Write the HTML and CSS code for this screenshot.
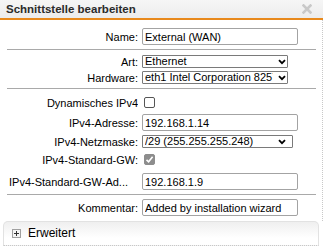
FILE: index.html
```html
<!DOCTYPE html>
<html lang="de">
<head>
    <meta charset="UTF-8">
    <meta name="viewport" content="width=device-width, initial-scale=1.0">
    <title>Schnittstelle bearbeiten</title>
    <link rel="stylesheet" href="styles.css">
</head>
<body>
    <div class="dialog">
        <div class="titlebar">
            <span class="title">Schnittstelle bearbeiten</span>
            <svg class="close" width="10" height="10" viewBox="0 0 10 10">
                <path d="M1.5 1.5 L8.5 8.5 M8.5 1.5 L1.5 8.5" stroke="#c9c9c9" stroke-width="2.6" stroke-linecap="square"/>
            </svg>
        </div>

        <div class="content">
            <div class="row row-name">
                <label for="name">Name:</label>
                <input type="text" id="name" class="text" value="External (WAN)">
            </div>

            <hr class="sep sep-1">

            <div class="row row-art">
                <label for="art">Art:</label>
                <select id="art" class="sel sel-art">
                    <option>Ethernet</option>
                </select>
            </div>
            <div class="row row-hw">
                <label for="hardware">Hardware:</label>
                <select id="hardware" class="sel sel-art">
                    <option>eth1 Intel Corporation 82574L Gigabit</option>
                </select>
            </div>

            <hr class="sep sep-2">

            <div class="row row-dyn">
                <label for="dyn">Dynamisches IPv4</label>
                <input type="checkbox" id="dyn" class="cb">
            </div>
            <div class="row row-addr">
                <label for="addr">IPv4-Adresse:</label>
                <input type="text" id="addr" class="text" value="192.168.1.14">
            </div>
            <div class="row row-mask">
                <label for="mask">IPv4-Netzmaske:</label>
                <select id="mask" class="sel sel-mask">
                    <option>/29 (255.255.255.248)</option>
                </select>
            </div>
            <div class="row row-gw">
                <label for="gw">IPv4-Standard-GW:</label>
                <input type="checkbox" id="gw" class="cb" checked>
            </div>
            <div class="row row-gwaddr">
                <label for="gwaddr" class="clipped">IPv4-Standard-GW-Ad...</label>
                <input type="text" id="gwaddr" class="text" value="192.168.1.9">
            </div>

            <hr class="sep sep-3">

            <div class="row row-comment">
                <label for="comment">Kommentar:</label>
                <input type="text" id="comment" class="text" value="Added by installation wizard">
            </div>
        </div>

        <div class="panel">
            <div class="panel-head">
                <span class="expander"></span>
                <span class="panel-title">Erweitert</span>
            </div>
        </div>
    </div>
</body>
</html>
```

FILE: styles.css
```css
body {
    margin: 0;
    font-family: "Liberation Sans", Arial, sans-serif;
    font-size: 11px;
    color: #000;
    background: #fff;
}
.dialog {
    width: 323px;
    height: 249px;
    overflow: hidden;
}
.titlebar {
    height: 18px;
    display: flex;
    align-items: center;
    justify-content: space-between;
    padding: 0 11px 0 6px;
    background: linear-gradient(#f6f6f6, #ececec);
    border-bottom: 2px solid #e8891c;
}
.title {
    font-size: 11.5px;
    color: #2b2b2b;
    font-weight: bold;
}
.close {
    display: block;
}
.content {
    padding: 8px 6px 0 7px;
    border-right: 1px dotted #c8c8c8;
}
.row {
    display: flex;
    align-items: center;
}
.row label {
    width: 131px;
    flex: none;
    text-align: right;
    margin-right: 4px;
    white-space: nowrap;
    overflow: hidden;
}
.row label.clipped {
    text-align: left;
    padding-left: 2px;
    width: 129px;
}
.sep {
    margin: 0;
    border: none;
    border-top: 1px solid #a9a9a9;
    height: 0;
}
.text {
    box-sizing: border-box;
    width: 156px;
    height: 17px;
    margin: 0;
    padding: 0 2px;
    font: inherit;
    color: #000;
    border: 1px solid #a3a3a3;
    border-radius: 2px;
    background: #fff;
    appearance: none;
    outline: none;
}
.sel {
    box-sizing: border-box;
    height: 13px;
    margin: 0;
    padding: 0 14px 0 2px;
    font: inherit;
    line-height: 11px;
    color: #000;
    border: 1px solid #7a7a7a;
    border-radius: 1px;
    appearance: none;
    background: #fff url("data:image/svg+xml,%3Csvg xmlns='http://www.w3.org/2000/svg' width='8' height='6' viewBox='0 0 8 6'%3E%3Cpath d='M1 1.2 L4 4.2 L7 1.2' fill='none' stroke='%23000' stroke-width='1.8'/%3E%3C/svg%3E") no-repeat;
    outline: none;
}
.sel-art {
    width: 146px;
    background-position: right 1px center;
}
.sel-mask {
    width: 151px;
    background-position: right 6px center;
}
.cb {
    appearance: none;
    box-sizing: border-box;
    width: 11px;
    height: 11px;
    margin: 0 0 0 2px;
    border: 1px solid #555;
    border-radius: 2px;
    background: #fff;
}
.cb:checked {
    border-color: #8d8d8d;
    background: #8d8d8d url("data:image/svg+xml,%3Csvg xmlns='http://www.w3.org/2000/svg' width='9' height='9' viewBox='0 0 9 9'%3E%3Cpath d='M1.5 4.8 L3.6 6.8 L7.6 1.8' fill='none' stroke='%23fff' stroke-width='1.6'/%3E%3C/svg%3E") no-repeat center;
}

/* vertical rhythm, matched to the original dialog */
.sep-1 { margin-top: 4px; }
.row-art { margin-top: 5px; }
.row-hw { margin-top: 3px; }
.sep-2 { margin-top: 4px; }
.row-dyn { margin-top: 8px; height: 11px; }
.row-addr { margin-top: 6px; }
.row-mask { margin-top: 4px; }
.row-gw { margin-top: 6px; height: 11px; }
.row-gwaddr { margin-top: 8px; }
.sep-3 { margin-top: 4px; }
.row-comment { margin-top: 4px; padding-bottom: 5px; }

.panel {
    margin: 0 4px 0 3px;
    height: 23px;
    border: 1px solid #e2e2e2;
    border-bottom: 1px dotted #c8c8c8;
    border-radius: 5px 5px 0 0;
    background: linear-gradient(#efefef, #fff 70%);
}
.panel-head {
    display: flex;
    align-items: center;
    padding: 4px 0 0 8px;
}
.expander {
    position: relative;
    box-sizing: border-box;
    width: 9px;
    height: 9px;
    border: 1px solid #a0a0a0;
    background: #f4f4f4;
    margin-right: 7px;
}
.expander::before,
.expander::after {
    content: "";
    position: absolute;
    background: #333;
}
.expander::before {
    left: 1px;
    top: 3px;
    width: 5px;
    height: 1px;
}
.expander::after {
    left: 3px;
    top: 1px;
    width: 1px;
    height: 5px;
}
.panel-title {
    font-size: 12px;
}
```
